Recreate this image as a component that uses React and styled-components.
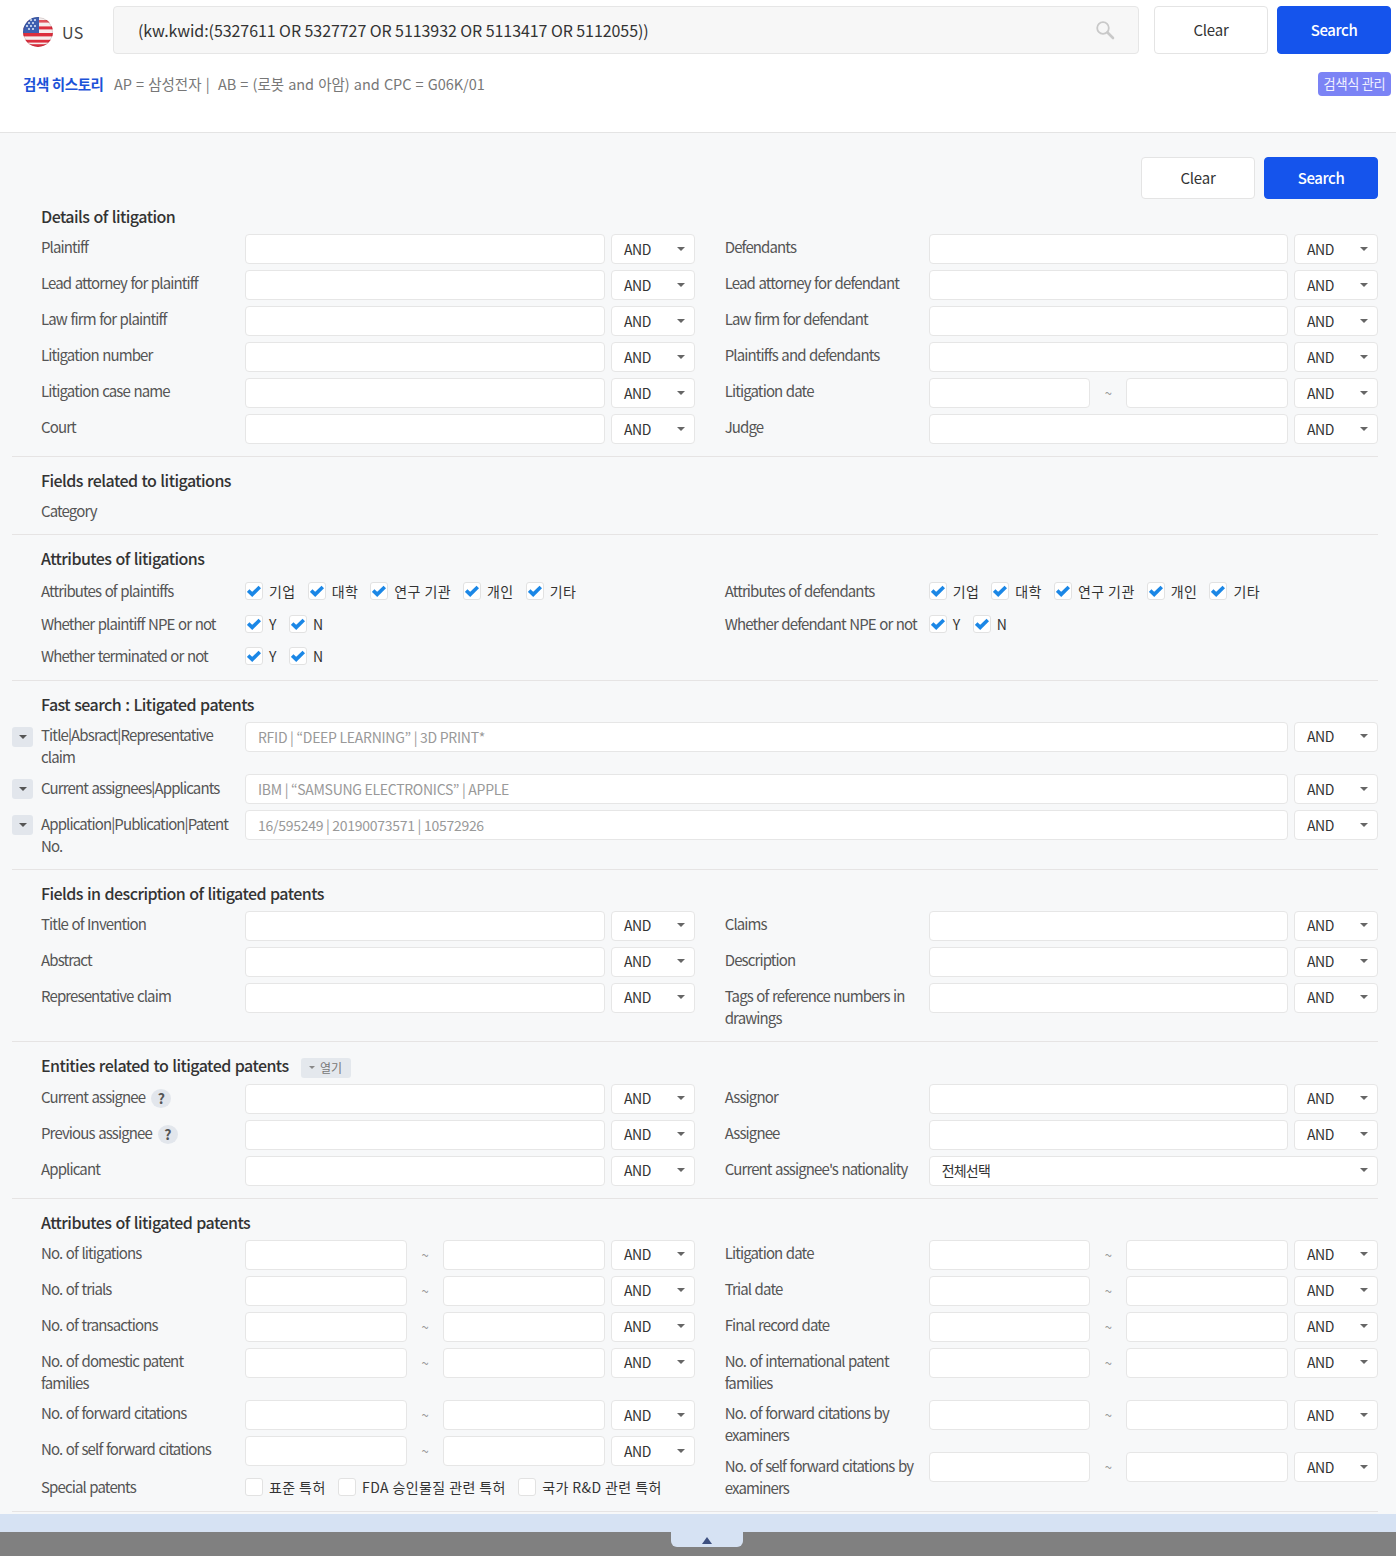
import React from "react";
import styled, { createGlobalStyle } from "styled-components";

const FONT = `"Noto Sans CJK KR", "Noto Sans", sans-serif`;

const GlobalStyle = createGlobalStyle`
  html, body {
    margin: 0;
    padding: 0;
    background: #fff;
    font-family: ${FONT};
  }
  * { box-sizing: border-box; }
  input { font-family: ${FONT}; }
`;

const Page = styled.div`
  width: 1396px;
  height: 1556px;
  overflow: hidden;
`;

// top search area
const Header = styled.header`
  height: 133px;
  padding: 6px 5px 0 23px;
  border-bottom: 1px solid #e4e4e4;
  background: #fff;
`;

const SearchRow = styled.div`
  display: flex;
  align-items: center;
  height: 48px;
`;

const Country = styled.div`
  display: flex;
  align-items: center;
  width: 90px;
  padding-top: 4px;
  gap: 9px;
  font-size: 16px;
  letter-spacing: 0.3px;
  color: #444;
`;

const QueryBox = styled.div`
  flex: 1;
  height: 48px;
  margin-right: 15px;
  padding: 0 23px 0 24px;
  display: flex;
  align-items: center;
  justify-content: space-between;
  background: #f7f7f7;
  border: 1px solid #e6e6e6;
  border-radius: 4px;
  font-size: 16px;
  letter-spacing: -0.07px;
  color: #333;
`;

const Button = styled.button`
  width: 114px;
  height: ${(p) => p.$height}px;
  margin-left: ${(p) => p.$left || 0}px;
  padding: 0 0 1px;
  border-radius: 4px;
  font-family: ${FONT};
  font-size: 15px;
  font-weight: ${(p) => (p.$primary ? 500 : 400)};
  letter-spacing: ${(p) => (p.$primary ? -0.4 : -0.2)}px;
  color: ${(p) => (p.$primary ? "#fff" : "#333")};
  background: ${(p) => (p.$primary ? "#1554ec" : "#fff")};
  border: 1px solid ${(p) => (p.$primary ? "#1554ec" : "#e4e4e4")};
`;

const HistoryRow = styled.div`
  display: flex;
  align-items: center;
  height: 24px;
  margin-top: 18px;
  font-size: 14.5px;
`;

const HistoryTitle = styled.strong`
  width: 91px;
  padding-bottom: 2px;
  font-weight: 700;
  letter-spacing: -0.4px;
  color: #1c52d8;
`;

const HistoryText = styled.span`
  flex: 1;
  padding-bottom: 2px;
  letter-spacing: -0.05px;
  word-spacing: 1px;
  color: #777;
`;

const ManageButton = styled.span`
  width: 73px;
  height: 24px;
  line-height: 23px;
  text-align: center;
  border-radius: 4px;
  background: #7b83f5;
  color: #f2f2ff;
  font-size: 13.2px;
  letter-spacing: -0.3px;
`;

// filter panel
const Panel = styled.main`
  height: 1381px;
  padding: 24px 18px 0 12px;
  background: #f7f8f9;
`;

const Actions = styled.div`
  display: flex;
  justify-content: flex-end;
  margin-bottom: 7px;
`;

const Section = styled.section`
  padding: ${(p) => (p.$first ? 0 : 13)}px 0 ${(p) => p.$bottom ?? 6}px 29px;
  border-bottom: 1px solid #e6e4e4;
`;

const Title = styled.h3`
  display: flex;
  align-items: flex-start;
  min-height: 22px;
  margin: 0 0 6px;
  font-size: 16px;
  line-height: 21px;
  font-weight: 500;
  letter-spacing: -0.55px;
  word-spacing: 1px;
  color: #333;
`;

const OpenButton = styled.span`
  display: inline-flex;
  align-items: center;
  justify-content: center;
  gap: 5px;
  width: 50px;
  height: 20px;
  margin: 3px 0 0 12px;
  border-radius: 3px;
  background: #e4e8ed;
  font-size: 12px;
  font-weight: 400;
  letter-spacing: 0;
  color: #777;
`;

const Columns = styled.div`
  display: grid;
  grid-template-columns: 654px 653.3px;
  column-gap: 29.7px;
  align-items: start;
`;

const Row = styled.div`
  display: flex;
  align-items: flex-start;
  margin-bottom: 6px;
`;

const Label = styled.label`
  flex: none;
  width: 193px;
  margin-right: 11px;
  padding-top: 2.3px;
  font-size: 15px;
  line-height: 22px;
  letter-spacing: -0.88px;
  word-spacing: 1px;
  color: #555;
`;

const Help = styled.span`
  display: inline-block;
  width: 20px;
  height: 19px;
  margin-left: 6px;
  vertical-align: -1px;
  border-radius: 50%;
  background: #e2e6ec;
  text-align: center;
  font-size: 14px;
  line-height: 18px;
  font-weight: 700;
  letter-spacing: 0;
  color: #555;
`;

const Field = styled.input`
  flex: 1;
  min-width: 0;
  height: 30px;
  padding: 0 12px;
  background: #fff;
  border: 1px solid #e6e6e6;
  border-radius: 4px;
  font-size: 14px;
  letter-spacing: -0.28px;
  outline: none;
  &::placeholder { color: #999; opacity: 1; }
`;

const Tilde = styled.span`
  flex: none;
  width: 36px;
  line-height: 30px;
  text-align: center;
  font-size: 13px;
  color: #999;
`;

const SelectBox = styled.div`
  flex: ${(p) => (p.$wide ? 1 : "none")};
  width: ${(p) => (p.$wide ? "auto" : "84px")};
  height: 30px;
  margin-left: ${(p) => (p.$wide ? 0 : 6)}px;
  padding: 0 9px 1px 12px;
  display: flex;
  align-items: center;
  justify-content: space-between;
  background: #fff;
  border: 1px solid #e6e6e6;
  border-radius: 4px;
  font-size: 14px;
  letter-spacing: ${(p) => (p.$wide ? -0.8 : -0.4)}px;
  color: #333;
`;

const Caret = styled.i`
  width: 0;
  height: 0;
  border-left: ${(p) => p.$size || 4}px solid transparent;
  border-right: ${(p) => p.$size || 4}px solid transparent;
  border-top: ${(p) => p.$size || 4}px solid ${(p) => p.$color || "#666"};
`;

const Toggle = styled.span`
  flex: none;
  display: flex;
  align-items: center;
  justify-content: center;
  width: 21px;
  height: 20px;
  margin: 5px 8px 0 -29px;
  border-radius: 3px;
  background: #e2e6ec;
`;

const CheckRow = styled.div`
  display: flex;
  align-items: center;
  min-height: 26.5px;
  padding-top: 4px;
  margin-bottom: 6px;
`;

const CheckLabel = styled(Label)`
  padding-top: 0;
`;

const CheckGroup = styled.div`
  display: flex;
  align-items: center;
  gap: ${(p) => p.$gap}px;
`;

const CheckItem = styled.span`
  display: inline-flex;
  align-items: center;
  gap: 6px;
  font-size: 14px;
  letter-spacing: 0.4px;
  color: #333;
`;

const Box = styled.span`
  display: inline-flex;
  align-items: center;
  justify-content: center;
  width: 18px;
  height: 18px;
  background: #fff;
  border: 1px solid #e2e2e2;
  border-radius: 3px;
`;

// bottom strip
const BlueBar = styled.div`
  height: 18px;
  background: #d6e2f3;
`;

const GreyBar = styled.div`
  display: flex;
  justify-content: center;
  height: 24px;
  padding-left: 18px;
  background: #808080;
`;

const CollapseTab = styled.div`
  display: flex;
  align-items: center;
  justify-content: center;
  width: 72px;
  height: 15px;
  padding-top: 2px;
  background: #d6e2f3;
  border-radius: 0 0 6px 6px;
`;

const UpArrow = styled.i`
  width: 0;
  height: 0;
  border-left: 5.5px solid transparent;
  border-right: 5.5px solid transparent;
  border-bottom: 7px solid #3d5080;
`;

const Flag = () => (
  <svg width="30" height="30" viewBox="0 0 30 30">
    <defs>
      <clipPath id="flagClip">
        <circle cx="15" cy="15" r="15" />
      </clipPath>
    </defs>
    <g clipPath="url(#flagClip)">
      <rect width="30" height="30" fill="#f6eeee" />
      <rect y="3" width="30" height="2.6" fill="#e0525c" />
      <rect y="9.4" width="30" height="3" fill="#dc2f3e" />
      <rect y="16" width="30" height="3.4" fill="#dc2f3e" />
      <rect y="22.8" width="30" height="7.2" fill="#dc2f3e" />
      <rect y="25.6" width="30" height="1.6" fill="#f6eeee" />
      <rect width="16" height="16" fill="#3f5fb0" />
      {[[4, 3], [8, 3], [12, 3], [6, 6], [10, 6], [4, 9], [8, 9], [12, 9], [6, 12], [10, 12]].map(([x, y]) => (
        <circle key={`${x}-${y}`} cx={x} cy={y} r="1" fill="#e6ecf8" />
      ))}
      <circle cx="15" cy="15" r="14.5" fill="none" stroke="#000" strokeOpacity="0.12" />
    </g>
  </svg>
);

const SearchIcon = () => (
  <svg width="20" height="20" viewBox="0 0 20 20" fill="none" stroke="#c9c9c9">
    <circle cx="8" cy="8" r="5.8" strokeWidth="1.8" />
    <path d="M12.5 12.5 L18 18" strokeWidth="2.6" strokeLinecap="round" />
  </svg>
);

const Tick = () => (
  <svg width="14" height="12" viewBox="0 0 14 12" fill="none">
    <path d="M1.2 5.6 L5.2 9.4 L12.8 2" stroke="#1b87e6" strokeWidth="3.6" />
  </svg>
);

const AndSelect = () => (
  <SelectBox>
    AND
    <Caret />
  </SelectBox>
);

const FieldRow = ({ label, help, range, wide, value }) => (
  <Row>
    <Label>
      {label}
      {help && <Help>?</Help>}
    </Label>
    {wide ? (
      <SelectBox $wide>
        {value}
        <Caret />
      </SelectBox>
    ) : range ? (
      <>
        <Field />
        <Tilde>~</Tilde>
        <Field />
        <AndSelect />
      </>
    ) : (
      <>
        <Field />
        <AndSelect />
      </>
    )}
  </Row>
);

const FieldColumn = ({ rows, children }) => (
  <div>
    {rows.map((row) => (
      <FieldRow key={row.label} {...row} />
    ))}
    {children}
  </div>
);

const Checks = ({ label, items, checked = true, gap = 12.1 }) => (
  <CheckRow>
    <CheckLabel>{label}</CheckLabel>
    <CheckGroup $gap={gap}>
      {items.map((item) => (
        <CheckItem key={item}>
          <Box>{checked && <Tick />}</Box>
          {item}
        </CheckItem>
      ))}
    </CheckGroup>
  </CheckRow>
);

const kinds = ["기업", "대학", "연구 기관", "개인", "기타"];
const yesNo = ["Y", "N"];

const text = (...labels) => labels.map((label) => ({ label }));
const range = (...labels) => labels.map((label) => ({ label, range: true }));

const detailsLeft = text("Plaintiff", "Lead attorney for plaintiff", "Law firm for plaintiff", "Litigation number", "Litigation case name", "Court");
const detailsRight = [
  ...text("Defendants", "Lead attorney for defendant", "Law firm for defendant", "Plaintiffs and defendants"),
  { label: "Litigation date", range: true },
  { label: "Judge" },
];

const fastRows = [
  { label: "Title|Absract|Representative claim", hint: "RFID | “DEEP LEARNING” | 3D PRINT*" },
  { label: "Current assignees|Applicants", hint: "IBM | “SAMSUNG ELECTRONICS” | APPLE" },
  { label: "Application|Publication|Patent No.", hint: "16/595249 | 20190073571 | 10572926" },
];

const descLeft = text("Title of Invention", "Abstract", "Representative claim");
const descRight = text("Claims", "Description", "Tags of reference numbers in drawings");

const entityLeft = [
  { label: "Current assignee", help: true },
  { label: "Previous assignee", help: true },
  { label: "Applicant" },
];
const entityRight = [
  ...text("Assignor", "Assignee"),
  { label: "Current assignee's nationality", wide: true, value: "전체선택" },
];

const statsLeft = range("No. of litigations", "No. of trials", "No. of transactions", "No. of domestic patent families", "No. of forward citations", "No. of self forward citations");
const statsRight = range("Litigation date", "Trial date", "Final record date", "No. of international patent families", "No. of forward citations by examiners", "No. of self forward citations by examiners");

export default function App() {
  return (
    <Page>
      <GlobalStyle />
      <Header>
        <SearchRow>
          <Country>
            <Flag />
            US
          </Country>
          <QueryBox>
            (kw.kwid:(5327611 OR 5327727 OR 5113932 OR 5113417 OR 5112055))
            <SearchIcon />
          </QueryBox>
          <Button $height={48}>Clear</Button>
          <Button $height={48} $left={9} $primary>Search</Button>
        </SearchRow>
        <HistoryRow>
          <HistoryTitle>검색 히스토리</HistoryTitle>
          <HistoryText>AP = 삼성전자 |&nbsp; AB = (로봇 and 아암) and CPC = G06K/01</HistoryText>
          <ManageButton>검색식 관리</ManageButton>
        </HistoryRow>
      </Header>

      <Panel>
        <Actions>
          <Button $height={42}>Clear</Button>
          <Button $height={42} $left={9} $primary>Search</Button>
        </Actions>

        <Section $first>
          <Title>Details of litigation</Title>
          <Columns>
            <FieldColumn rows={detailsLeft} />
            <FieldColumn rows={detailsRight} />
          </Columns>
        </Section>

        <Section $bottom={5.7}>
          <Title>Fields related to litigations</Title>
          <Row>
            <Label>Category</Label>
          </Row>
        </Section>

        <Section $bottom={6.5}>
          <Title>Attributes of litigations</Title>
          <Columns>
            <div>
              <Checks label="Attributes of plaintiffs" items={kinds} />
              <Checks label="Whether plaintiff NPE or not" items={yesNo} />
              <Checks label="Whether terminated or not" items={yesNo} />
            </div>
            <div>
              <Checks label="Attributes of defendants" items={kinds} />
              <Checks label="Whether defendant NPE or not" items={yesNo} />
            </div>
          </Columns>
        </Section>

        <Section>
          <Title>Fast search : Litigated patents</Title>
          {fastRows.map((row) => (
            <Row key={row.label}>
              <Toggle><Caret $size={4} $color="#555" /></Toggle>
              <Label>{row.label}</Label>
              <Field placeholder={row.hint} />
              <AndSelect />
            </Row>
          ))}
        </Section>

        <Section>
          <Title>Fields in description of litigated patents</Title>
          <Columns>
            <FieldColumn rows={descLeft} />
            <FieldColumn rows={descRight} />
          </Columns>
        </Section>

        <Section>
          <Title>
            Entities related to litigated patents
            <OpenButton><Caret $size={3} $color="#888" />열기</OpenButton>
          </Title>
          <Columns>
            <FieldColumn rows={entityLeft} />
            <FieldColumn rows={entityRight} />
          </Columns>
        </Section>

        <Section>
          <Title>Attributes of litigated patents</Title>
          <Columns>
            <FieldColumn rows={statsLeft}>
              <Checks
                label="Special patents"
                items={["표준 특허", "FDA 승인물질 관련 특허", "국가 R&D 관련 특허"]}
                checked={false}
                gap={12.4}
              />
            </FieldColumn>
            <FieldColumn rows={statsRight} />
          </Columns>
        </Section>
      </Panel>

      <BlueBar />
      <GreyBar>
        <CollapseTab><UpArrow /></CollapseTab>
      </GreyBar>
    </Page>
  );
}
